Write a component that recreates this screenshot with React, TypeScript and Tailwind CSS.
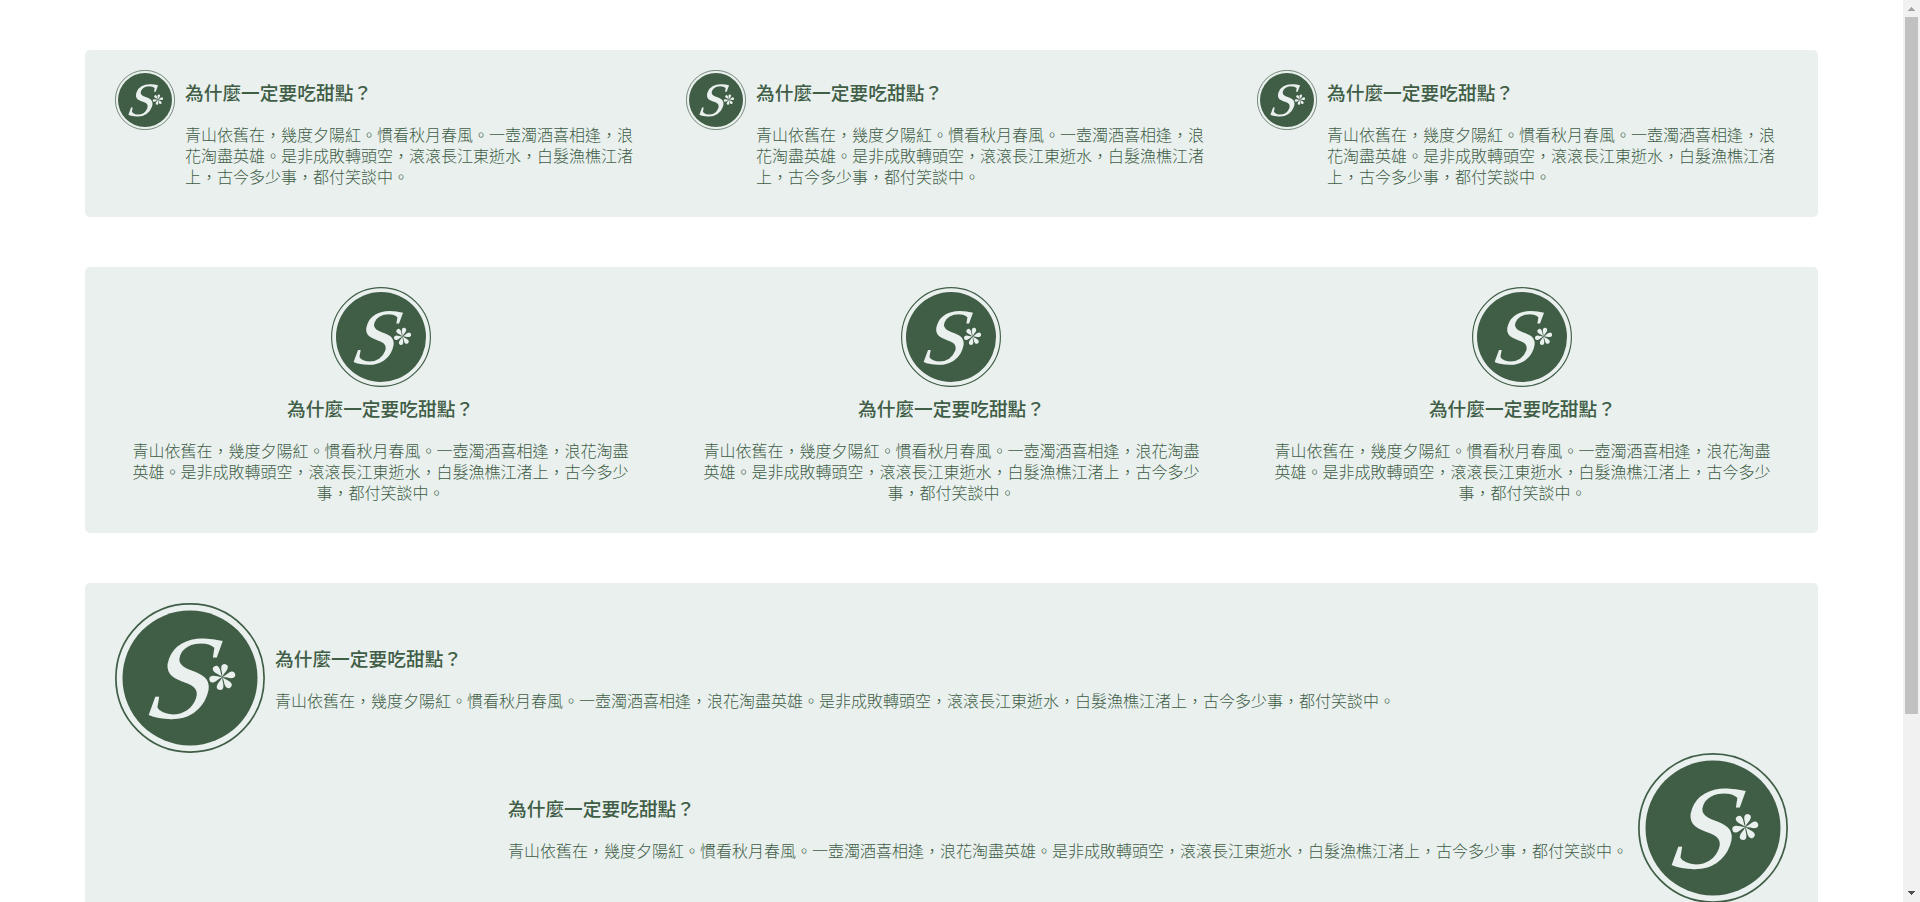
const title = "為什麼一定要吃甜點？";
const body =
  "青山依舊在，幾度夕陽紅。慣看秋月春風。一壺濁酒喜相逢，浪花淘盡英雄。是非成敗轉頭空，滾滾長江東逝水，白髮漁樵江渚上，古今多少事，都付笑談中。";

const petals = [13, 77, 142, 193, 257, 322];

function Logo({ className }: { className: string }) {
  return (
    <svg viewBox="0 0 150 150" className={`block shrink-0 ${className}`}>
      <circle cx="75" cy="75" r="74.1" fill="none" stroke="#405d46" strokeWidth="1.7" />
      <circle cx="75" cy="75" r="67.5" fill="#405d46" />
      <text
        transform="translate(24.6 115.2) skewX(-20)"
        fontFamily="'Liberation Serif', serif"
        fontSize="120"
        fill="#e9f0ee"
      >
        S
      </text>
      <g transform="translate(107.3 74)" fill="#e9f0ee">
        {petals.map((angle) => (
          <path
            key={angle}
            transform={`rotate(${angle})`}
            d="M0 -0.3C-0.7 -4 -3.3 -6.8 -3.3 -9.9A3.3 3.3 0 0 1 3.3 -9.9C3.3 -6.8 0.7 -4 0 -0.3Z"
          />
        ))}
      </g>
    </svg>
  );
}

function Copy({ className = "" }: { className?: string }) {
  return (
    <div className={`px-[10px] pt-[9px] pb-[10px] ${className}`}>
      <h3 className="mb-[20px] text-[18.72px] leading-[25px] font-medium">{title}</h3>
      <p className="text-[16px] leading-[21px] font-light">{body}</p>
    </div>
  );
}

function Scrollbar() {
  return (
    <div className="flex w-[17px] shrink-0 flex-col items-center bg-[#f1f1f1]">
      <svg viewBox="0 0 17 17" className="block h-[17px] w-[17px]" shapeRendering="crispEdges">
        <path d="M5 11h7v-1h-1v-1h-1v-1h-1v-1h-1v1h-1v1h-1v1h-1z" fill="#a3a3a3" />
      </svg>
      <div className="h-[697px] w-[13px] bg-[#c1c1c1]" />
      <svg viewBox="0 0 17 17" className="mt-auto block h-[17px] w-[17px]" shapeRendering="crispEdges">
        <path d="M5 6h7v1h-1v1h-1v1h-1v1h-1v-1h-1v-1h-1v-1h-1z" fill="#505050" />
      </svg>
    </div>
  );
}

const columns = [0, 1, 2];

export default function App() {
  return (
    <div className="flex h-[902px] overflow-hidden bg-white font-['Noto_Sans_CJK_TC',sans-serif] text-[#405d46]" lang="zh-Hant">
      <main className="flex h-[902px] flex-1 flex-col gap-[50px] overflow-hidden px-[85px] pt-[50px]">
        <section className="grid h-[167px] shrink-0 grid-cols-3 gap-[40px] rounded-[5px] bg-[#e9f0ee] px-[30px] py-[20px]">
          {columns.map((i) => (
            <div key={i} className="flex items-start">
              <Logo className="size-[60px]" />
              <Copy />
            </div>
          ))}
        </section>
        <section className="grid h-[266px] shrink-0 grid-cols-3 gap-[39.8px] rounded-[5px] bg-[#e9f0ee] px-[30px] py-[20px]">
          {columns.map((i) => (
            <div key={i} className="flex flex-col items-center text-center">
              <Logo className="size-[100px]" />
              <Copy className="-mt-px" />
            </div>
          ))}
        </section>
        <section className="shrink-0 rounded-[5px] bg-[#e9f0ee] px-[30px] py-[20px]">
          <div className="flex items-center">
            <Logo className="size-[150px]" />
            <Copy />
          </div>
          <div className="flex flex-row-reverse items-center">
            <Logo className="size-[150px]" />
            <Copy />
          </div>
        </section>
      </main>
      <Scrollbar />
    </div>
  );
}
